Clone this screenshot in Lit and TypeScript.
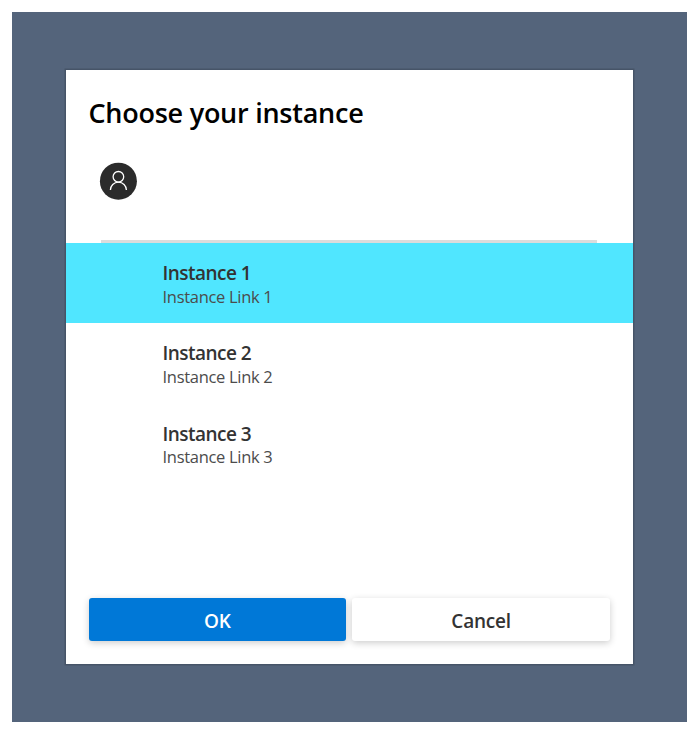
import { LitElement, html, css } from "lit";
import { customElement, property, state } from "lit/decorators.js";
import { classMap } from "lit/directives/class-map.js";

interface Instance {
  name: string;
  link: string;
}

@customElement("instance-row")
class InstanceRow extends LitElement {
  @property() name = "";
  @property() link = "";
  @property({ type: Boolean }) selected = false;

  static styles = css`
    :host {
      display: block;
    }
    .row {
      box-sizing: border-box;
      height: 80.3px;
      padding: 17px 0 0 96.5px;
      color: #333;
      cursor: pointer;
      white-space: nowrap;
    }
    .selected {
      background: #50e6ff;
    }
    .name {
      font-size: 19px;
      font-weight: 600;
      line-height: 26px;
      letter-spacing: -0.52px;
    }
    .link {
      margin-top: -0.2px;
      font-size: 16.5px;
      line-height: 22px;
      letter-spacing: -0.3px;
      color: #4c4c4c;
    }
  `;

  render() {
    return html`
      <div class=${classMap({ row: true, selected: this.selected })}>
        <div class="name">${this.name}</div>
        <div class="link">${this.link}</div>
      </div>
    `;
  }
}

@customElement("app-root")
class AppRoot extends LitElement {
  @state() private chosen = 0;

  private instances: Instance[] = [
    { name: "Instance 1", link: "Instance Link 1" },
    { name: "Instance 2", link: "Instance Link 2" },
    { name: "Instance 3", link: "Instance Link 3" },
  ];

  static styles = css`
    :host {
      display: block;
      box-sizing: border-box;
      height: 732px;
      padding: 12px 10px 10px 12px;
      background: #fff;
      font-family: "Segoe UI", "Open Sans", "Noto Sans", sans-serif;
    }
    .backdrop {
      box-sizing: border-box;
      height: 710px;
      padding: 58px 54px 58px;
      background: #54647b;
    }
    .dialog {
      box-sizing: border-box;
      display: flex;
      flex-direction: column;
      height: 594px;
      background: #fff;
      box-shadow: 0 0 0 1.5px #465468;
    }
    h1 {
      margin: 24px 0 0 22.5px;
      color: #000;
      font-size: 27px;
      font-weight: 600;
      line-height: 38px;
      letter-spacing: -0.25px;
      white-space: nowrap;
    }
    .avatar {
      display: block;
      width: 38px;
      height: 38px;
      margin: 30px 0 0 33px;
    }
    .divider {
      height: 3px;
      margin: 40px 36px 0 35px;
      background: #dcdcdc;
    }
    .list {
      flex: 1;
    }
    .actions {
      display: grid;
      grid-template-columns: 1fr 1fr;
      gap: 6px;
      margin: 0 23px 23px 22.5px;
    }
    button {
      height: 43px;
      padding: 2px 0 0;
      border: 0;
      border-radius: 3px;
      background: #fff;
      color: #333;
      font: 600 19px / 26px "Segoe UI", "Open Sans", "Noto Sans", sans-serif;
      letter-spacing: -0.2px;
      box-shadow: 0 2px 7px rgba(0, 0, 0, 0.2);
    }
    .primary {
      background: #0078d7;
      color: #fff;
    }
  `;

  render() {
    return html`
      <div class="backdrop">
        <div class="dialog" role="dialog">
          <h1>Choose your instance</h1>
          <svg class="avatar" viewBox="0 0 38 38" fill="none">
            <circle cx="19.4" cy="19.2" r="18.5" fill="#2b2b2b" />
            <circle cx="19.4" cy="14.8" r="5.3" stroke="#fff" stroke-width="1.3" />
            <path d="M11.4 28a8 7.9 0 0 1 16 0" stroke="#fff" stroke-width="1.3" />
          </svg>
          <div class="divider"></div>
          <div class="list">
            ${this.instances.map(
              (item, i) => html`
                <instance-row
                  .name=${item.name}
                  .link=${item.link}
                  .selected=${i === this.chosen}
                  @click=${() => (this.chosen = i)}
                ></instance-row>
              `
            )}
          </div>
          <div class="actions">
            <button class="primary">OK</button>
            <button>Cancel</button>
          </div>
        </div>
      </div>
    `;
  }
}
